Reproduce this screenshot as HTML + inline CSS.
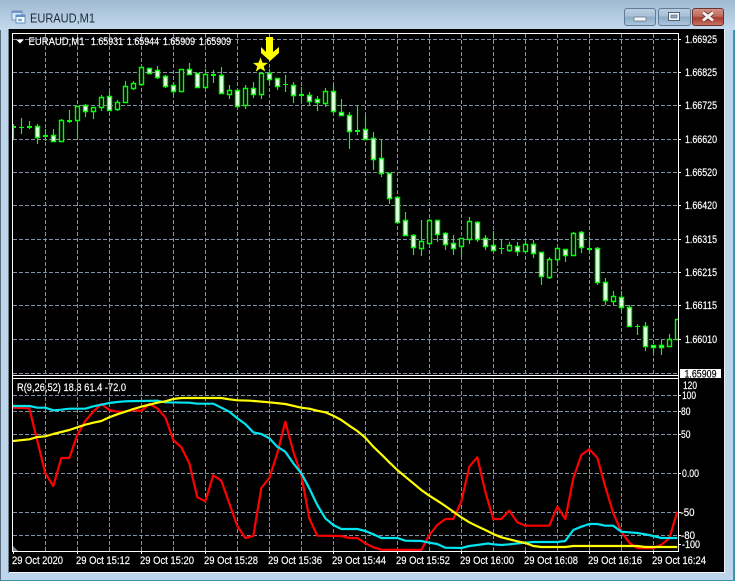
<!DOCTYPE html>
<html>
<head>
<meta charset="utf-8">
<title>EURAUD,M1</title>
<style>
html,body{margin:0;padding:0;width:736px;height:582px;overflow:hidden;background:#fff}
svg{display:block}
text{font-family:"Liberation Sans",sans-serif;font-size:10.8px;fill:#fff;stroke:#fff;stroke-width:.18px}
</style>
</head>
<body>
<svg width="736" height="582" viewBox="0 0 736 582" xmlns="http://www.w3.org/2000/svg">
<defs>
<linearGradient id="tb" x1="0" y1="0" x2="0" y2="1"><stop offset="0" stop-color="#9fbad2"/><stop offset="1" stop-color="#c4d9ec"/></linearGradient>
<linearGradient id="bt" x1="0" y1="0" x2="0" y2="1"><stop offset="0" stop-color="#bccfe0"/><stop offset=".45" stop-color="#a9c0d6"/><stop offset=".5" stop-color="#8caac5"/><stop offset="1" stop-color="#aec8df"/></linearGradient>
<linearGradient id="cl" x1="0" y1="0" x2="0" y2="1"><stop offset="0" stop-color="#d4968a"/><stop offset=".45" stop-color="#c06a5c"/><stop offset=".55" stop-color="#a83a2c"/><stop offset="1" stop-color="#c87566"/></linearGradient>
<clipPath id="cm"><rect x="13" y="34" width="665" height="341"/></clipPath>
<clipPath id="ci"><rect x="13" y="379" width="665" height="172"/></clipPath>
</defs>

<!-- window frame -->
<rect x="0" y="0" width="735" height="581" fill="#3f93ab"/>
<rect x="0" y="0" width="733" height="580" fill="#bcd5ea"/>
<rect x="0" y="0" width="735" height="30" fill="url(#tb)"/>
<rect x="0" y="30" width="1" height="551" fill="#5d6e7e"/>
<rect x="8" y="29" width="1" height="544" fill="#6f7f8e"/>

<!-- title icon -->
<rect x="12" y="11" width="10" height="9" fill="#dcebf7" stroke="#6d94c4"/>
<rect x="12" y="11" width="10" height="2" fill="#6d94c4"/>
<rect x="16" y="15" width="9" height="8" fill="#fff" stroke="#5b8fc8"/>
<rect x="16" y="15" width="9" height="2" fill="#5b8fc8"/>
<path d="M18 19l1 2 1-2 1 2 1-2" fill="none" stroke="#4a7fb8" stroke-width=".8"/>
<text x="30" y="22.5" style="font-size:13px;fill:#1b2b3c;stroke:none" textLength="65" lengthAdjust="spacingAndGlyphs">EURAUD,M1</text>

<!-- caption buttons -->
<rect x="624.5" y="8.5" width="31" height="17" rx="2.5" fill="url(#bt)" stroke="#5f7c98"/>
<rect x="634" y="17" width="12" height="4" rx="1" fill="#f4f7fa" stroke="#5f7388" stroke-width=".7"/>
<rect x="658.5" y="8.5" width="32" height="17" rx="2.5" fill="url(#bt)" stroke="#5f7c98"/>
<rect x="668.5" y="12.5" width="11" height="8" fill="#f4f7fa" stroke="#4f6378"/>
<rect x="671" y="15" width="6" height="3" fill="#8fa8c0" stroke="#4f6378" stroke-width=".6"/>
<rect x="692.5" y="8.5" width="31" height="17" rx="2.5" fill="url(#cl)" stroke="#6e3330"/>
<path d="M703 12.5l10 8m0-8l-10 8" stroke="#5a3030" stroke-width="4.4" fill="none"/>
<path d="M703 12.5l10 8m0-8l-10 8" stroke="#f5f0ee" stroke-width="3" fill="none"/>

<!-- chart surface -->
<rect x="9" y="29" width="716" height="544" fill="#000"/>
<rect x="9" y="572" width="716" height="1" fill="#f4f7fa"/>
<rect x="724" y="29" width="1" height="544" fill="#e8eef4"/>

<!-- grid main -->
<g stroke="#8192a3" stroke-width="1" stroke-dasharray="4 2" fill="none" shape-rendering="crispEdges">
<path d="M13 39.5H678M13 72.5H678M13 105.5H678M13 139.5H678M13 172.5H678M13 205.5H678M13 239.5H678M13 272.5H678M13 305.5H678M13 339.5H678M13 373.5H678"/>
<path d="M45.5 34V375M77.5 34V375M109.5 34V375M141.5 34V375M173.5 34V375M205.5 34V375M237.5 34V375M269.5 34V375M301.5 34V375M333.5 34V375M365.5 34V375M397.5 34V375M429.5 34V375M461.5 34V375M493.5 34V375M525.5 34V375M557.5 34V375M589.5 34V375M621.5 34V375M653.5 34V375"/>
<path d="M13 395.5H678M13 411.5H678M13 434.5H678M13 473.5H678M13 512.5H678M13 535.5H678"/>
<path d="M45.5 379V551M77.5 379V551M109.5 379V551M141.5 379V551M173.5 379V551M205.5 379V551M237.5 379V551M269.5 379V551M301.5 379V551M333.5 379V551M365.5 379V551M397.5 379V551M429.5 379V551M461.5 379V551M493.5 379V551M525.5 379V551M557.5 379V551M589.5 379V551M621.5 379V551M653.5 379V551"/>
</g>

<!-- candles -->
<g clip-path="url(#cm)">
<path fill="none" stroke="#00ff00" stroke-width="1.15" d="M13.5 124V139M21.5 118V134M29.5 121V129M37.5 124V144M45.5 129V141M53.5 129V141M61.5 119V142M69.5 110V123M77.5 106V138M85.5 104V117M93.5 107V119M101.5 95V111M109.5 91V110M117.5 100V111M125.5 81V102M133.5 81V90M141.5 67V85M149.5 68V73M157.5 66V79M165.5 75V88M173.5 82V95M181.5 69V91M189.5 63V75M197.5 73V87M205.5 69V87M213.5 70V83M221.5 67V94M229.5 85V99M237.5 90V106M245.5 85V109M253.5 82V98M261.5 73V99M269.5 69V85M277.5 78V90M285.5 75V92M293.5 82V103M301.5 87V103M309.5 92V106M317.5 96V111M325.5 88V107M333.5 85V113M341.5 99V116M349.5 112V149M357.5 105V135M365.5 116V140M373.5 132V170M381.5 139V177M389.5 173V204M397.5 197V222M405.5 212V236M413.5 234V255M421.5 220V256M429.5 219V243M437.5 220V242M445.5 232V250M453.5 235V255M461.5 238V258M469.5 217V244M477.5 221V242M485.5 235V250M493.5 231V250M501.5 239V254M509.5 242V252M517.5 242V256M525.5 239V252M533.5 240V258M541.5 252V285M549.5 257V279M557.5 248V266M565.5 249V262M573.5 232V256M581.5 231V253M589.5 237V253M597.5 247V285M605.5 278V305M613.5 291V305M621.5 291V312M629.5 305V327M637.5 324V335M645.5 322V351M653.5 345V354M661.5 340V355M669.5 334V347M677.5 319V339"/>
<path fill="#000" stroke="#00ff00" stroke-width="1.4" d="M59.5 120.5h4v21h-4zM75.5 106.5h4v14h-4zM91.5 107.5h4v4h-4zM99.5 97.5h4v10h-4zM115.5 102.5h4v7h-4zM123.5 86.5h4v16h-4zM131.5 83.5h4v5h-4zM139.5 67.5h4v17h-4zM179.5 69.5h4v22h-4zM203.5 74.5h4v13h-4zM227.5 90.5h4v4h-4zM243.5 88.5h4v17h-4zM259.5 73.5h4v21h-4zM323.5 91.5h4v12h-4zM419.5 241.5h4v7h-4zM427.5 220.5h4v23h-4zM459.5 238.5h4v8h-4zM467.5 221.5h4v18h-4zM507.5 245.5h4v5h-4zM523.5 244.5h4v7h-4zM547.5 259.5h4v18h-4zM555.5 248.5h4v11h-4zM571.5 233.5h4v22h-4zM611.5 296.5h4v5h-4zM667.5 339.5h4v7h-4zM675.5 319.5h4v20h-4z"/>
<path fill="#fff" stroke="#00ff00" stroke-width="1.4" d="M35.5 126.5h4v11h-4zM51.5 135.5h4v6h-4zM83.5 105.5h4v6h-4zM107.5 96.5h4v14h-4zM147.5 68.5h4v5h-4zM155.5 70.5h4v7h-4zM163.5 76.5h4v10h-4zM171.5 85.5h4v6h-4zM187.5 69.5h4v5h-4zM195.5 73.5h4v14h-4zM219.5 75.5h4v18h-4zM235.5 90.5h4v16h-4zM251.5 88.5h4v6h-4zM267.5 73.5h4v6h-4zM275.5 78.5h4v8h-4zM291.5 85.5h4v10h-4zM307.5 95.5h4v6h-4zM315.5 99.5h4v3h-4zM331.5 91.5h4v20h-4zM339.5 112.5h4v3h-4zM347.5 115.5h4v16h-4zM363.5 129.5h4v10h-4zM371.5 138.5h4v21h-4zM379.5 158.5h4v15h-4zM387.5 173.5h4v25h-4zM395.5 197.5h4v25h-4zM403.5 220.5h4v15h-4zM411.5 235.5h4v12h-4zM435.5 220.5h4v14h-4zM443.5 233.5h4v11h-4zM451.5 243.5h4v5h-4zM475.5 222.5h4v17h-4zM483.5 238.5h4v8h-4zM491.5 245.5h4v5h-4zM515.5 246.5h4v5h-4zM531.5 244.5h4v9h-4zM539.5 252.5h4v24h-4zM563.5 249.5h4v6h-4zM579.5 232.5h4v15h-4zM595.5 248.5h4v34h-4zM603.5 282.5h4v18h-4zM619.5 297.5h4v10h-4zM627.5 307.5h4v19h-4zM643.5 326.5h4v20h-4zM651.5 345.5h4v2h-4zM659.5 345.5h4v2h-4z"/>
<path fill="#00ff00" d="M11 126h5v2h-5zM19 127h5v1h-5zM27 126h5v2h-5zM43 135h5v2h-5zM67 120h5v2h-5zM211 74h5v2h-5zM283 84h5v1h-5zM299 94h5v2h-5zM355 130h5v2h-5zM499 248h5v1h-5zM587 248h5v2h-5zM635 326h5v1h-5z"/>
</g>

<!-- arrow and star -->
<path fill="#ffff00" d="M266 37h7v15l6-5v6l-9 8-9-8v-6l5 5z"/>
<path fill="#ffff00" d="M260.5 57.5l2 5.2 5.5.2-4.3 3.4 1.5 5.2-4.7-3-4.7 3 1.5-5.2-4.3-3.4 5.5-.2z"/>

<!-- indicator lines -->
<g clip-path="url(#ci)" fill="none" stroke-width="2.2" stroke-linejoin="round">
<polyline stroke="#ff0000" points="13,407.7 29.3,408.3 45.3,473.3 53.3,486 61.3,458 69.3,458 77.3,435 85.3,421 93.3,411.7 101.3,404 109.3,410 117.3,411.7 125.3,411.7 133.3,410 141.3,411 149.3,404 157.3,408.3 165.3,417.3 173.3,440 181.3,447.3 189.3,463.3 197.3,497.3 205.3,501.3 213.3,475.3 221.3,480.7 229.3,503.3 237.3,526 245.3,538 253.3,536 261.3,488 269.3,478 277.3,453.3 285.3,421.7 293.3,451.7 301.3,475 309.3,518.3 317.3,535.7 341.3,536 349.3,538 357.3,538 365.3,543.3 373.3,547.3 381.3,549.7 421.3,550 429.3,535 437.3,525 445.3,519 453.3,519 461.3,501.7 469.3,466.7 477.3,457.3 485.3,491.7 493.3,519 501.3,519 509.3,510.7 517.3,522.3 525.3,525.7 549.3,525.7 557.3,506.7 565.3,519 573.3,478.3 581.3,455 589.3,449.3 597.3,457.7 605.3,486.7 613.3,513.3 621.3,531.7 629.3,542.7 637.3,548 653.3,548.3 661.3,544.7 669.3,538.3 677.3,511.7"/>
<polyline stroke="#00e5f0" points="13,406 29.3,406 37.3,407.7 45.3,407.7 53.3,410.3 61.3,409.7 69.3,408.7 85.3,408.7 93.3,406.3 101.3,404.7 109.3,403 117.3,402 125.3,401.3 157.3,400.7 165.3,402.3 189.3,402.7 197.3,403.7 213.3,403.7 221.3,407.7 229.3,411.7 237.3,418.3 245.3,424 253.3,432.3 261.3,434 269.3,438.3 277.3,446.7 285.3,451.7 293.3,463.3 301.3,473.3 309.3,488.3 317.3,505 325.3,518.3 333.3,525 341.3,529 357.3,529 365.3,531 373.3,534.3 381.3,538 397.3,538 405.3,540.7 421.3,541 429.3,542.7 437.3,544 445.3,547.7 461.3,548 469.3,546 477.3,545 488,543.5 493.3,544.3 501.3,545 509.3,544.3 525.3,542.7 533.3,542 557.3,542 565.3,541 573.3,530 581.3,526.7 589.3,524 597.3,524 605.3,525.7 613.3,525.7 621.3,531.7 637.3,533 645.3,534.3 653.3,536 661.3,538 677.3,538"/>
<polyline stroke="#ffff00" points="13,441 29.3,439.3 37.3,437 45.3,436.3 53.3,434 61.3,432 69.3,430 77.3,427.3 85.3,424.7 93.3,422.7 101.3,421 109.3,417.3 117.3,414.3 125.3,411.7 133.3,409 141.3,406.7 149.3,404.7 157.3,402.7 165.3,401.3 173.3,399 181.3,398 221.3,398 229.3,399.3 237.3,400.3 250,400.7 269.3,402.3 285.3,404 301.3,407.7 309.3,408.7 317.3,410.7 325.3,412.3 333.3,415.7 341.3,420 349.3,425.7 357.3,431 365.3,437.7 373.3,446.7 381.3,454.3 389.3,462.3 397.3,470 405.3,476.7 413.3,483.3 421.3,490 429.3,495.7 437.3,500.7 445.3,506 453.3,511.7 461.3,517.3 469.3,522.3 477.3,526.3 485.3,530 493.3,534 501.3,537.3 509.3,539.3 517.3,541.3 525.3,543 533.3,546 541.3,547 565.3,547 573.3,546 637.3,546 645.3,547 677.3,547"/>
</g>
<path d="M13 546l5 5h-5z" fill="#778899"/>

<!-- pane frames -->
<g fill="none" stroke="#fff" stroke-width="1" shape-rendering="crispEdges">
<path d="M12.5 33V552M12 33.5H679M678.5 33V552M12 375.5H679M12 378.5H679M12 551.5H679"/>
<path d="M678 39.5h3M678 72.5h3M678 105.5h3M678 139.5h3M678 172.5h3M678 205.5h3M678 239.5h3M678 272.5h3M678 305.5h3M678 339.5h3M678 395.5h3M678 411.5h3M678 434.5h3M678 473.5h3M678 512.5h3M678 535.5h3M678 544.5h3"/>
<path d="M13.5 551v3M77.5 551v3M141.5 551v3M205.5 551v3M269.5 551v3M333.5 551v3M397.5 551v3M461.5 551v3M525.5 551v3M589.5 551v3M653.5 551v3"/>
</g>

<!-- text -->
<path d="M16 39.5h8l-4 4z" fill="#fff"/>
<text x="28.5" y="45" textLength="56" lengthAdjust="spacingAndGlyphs">EURAUD,M1</text>
<text x="91" y="45" textLength="32" lengthAdjust="spacingAndGlyphs">1.65931</text>
<text x="127" y="45" textLength="32" lengthAdjust="spacingAndGlyphs">1.65944</text>
<text x="163" y="45" textLength="32" lengthAdjust="spacingAndGlyphs">1.65909</text>
<text x="199" y="45" textLength="32" lengthAdjust="spacingAndGlyphs">1.65909</text>
<text x="17" y="391" textLength="109" lengthAdjust="spacingAndGlyphs">R(9,26,52) 18.3 61.4 -72.0</text>

<g>
<text x="685" y="43" textLength="32" lengthAdjust="spacingAndGlyphs">1.66925</text>
<text x="685" y="76" textLength="32" lengthAdjust="spacingAndGlyphs">1.66825</text>
<text x="685" y="109" textLength="32" lengthAdjust="spacingAndGlyphs">1.66725</text>
<text x="685" y="143" textLength="32" lengthAdjust="spacingAndGlyphs">1.66620</text>
<text x="685" y="176" textLength="32" lengthAdjust="spacingAndGlyphs">1.66520</text>
<text x="685" y="209" textLength="32" lengthAdjust="spacingAndGlyphs">1.66420</text>
<text x="685" y="243" textLength="32" lengthAdjust="spacingAndGlyphs">1.66315</text>
<text x="685" y="276" textLength="32" lengthAdjust="spacingAndGlyphs">1.66215</text>
<text x="685" y="309" textLength="32" lengthAdjust="spacingAndGlyphs">1.66115</text>
<text x="685" y="343" textLength="32" lengthAdjust="spacingAndGlyphs">1.66010</text>
</g>
<rect x="680" y="369" width="41" height="9" fill="#fff"/>
<text x="684.5" y="377.5" style="fill:#000;stroke:#000" textLength="32" lengthAdjust="spacingAndGlyphs">1.65909</text>
<g>
<text x="683" y="389" textLength="14" lengthAdjust="spacingAndGlyphs">120</text>
<text x="682" y="399" textLength="14" lengthAdjust="spacingAndGlyphs">100</text>
<text x="681" y="415" textLength="9.5" lengthAdjust="spacingAndGlyphs">80</text>
<text x="681" y="438" textLength="9.5" lengthAdjust="spacingAndGlyphs">50</text>
<text x="682" y="477" textLength="17" lengthAdjust="spacingAndGlyphs">0.00</text>
<text x="680.5" y="516" textLength="14" lengthAdjust="spacingAndGlyphs">-50</text>
<text x="681" y="539" textLength="14" lengthAdjust="spacingAndGlyphs">-80</text>
<text x="682" y="548" textLength="18" lengthAdjust="spacingAndGlyphs">-100</text>
</g>
<g>
<text x="12" y="564" textLength="51" lengthAdjust="spacingAndGlyphs">29 Oct 2020</text>
<text x="76" y="564" textLength="54" lengthAdjust="spacingAndGlyphs">29 Oct 15:12</text>
<text x="140" y="564" textLength="54" lengthAdjust="spacingAndGlyphs">29 Oct 15:20</text>
<text x="204" y="564" textLength="54" lengthAdjust="spacingAndGlyphs">29 Oct 15:28</text>
<text x="268" y="564" textLength="54" lengthAdjust="spacingAndGlyphs">29 Oct 15:36</text>
<text x="332" y="564" textLength="54" lengthAdjust="spacingAndGlyphs">29 Oct 15:44</text>
<text x="396" y="564" textLength="54" lengthAdjust="spacingAndGlyphs">29 Oct 15:52</text>
<text x="460" y="564" textLength="54" lengthAdjust="spacingAndGlyphs">29 Oct 16:00</text>
<text x="524" y="564" textLength="54" lengthAdjust="spacingAndGlyphs">29 Oct 16:08</text>
<text x="588" y="564" textLength="54" lengthAdjust="spacingAndGlyphs">29 Oct 16:16</text>
<text x="652" y="564" textLength="54" lengthAdjust="spacingAndGlyphs">29 Oct 16:24</text>
</g>
</svg>
</body>
</html>
